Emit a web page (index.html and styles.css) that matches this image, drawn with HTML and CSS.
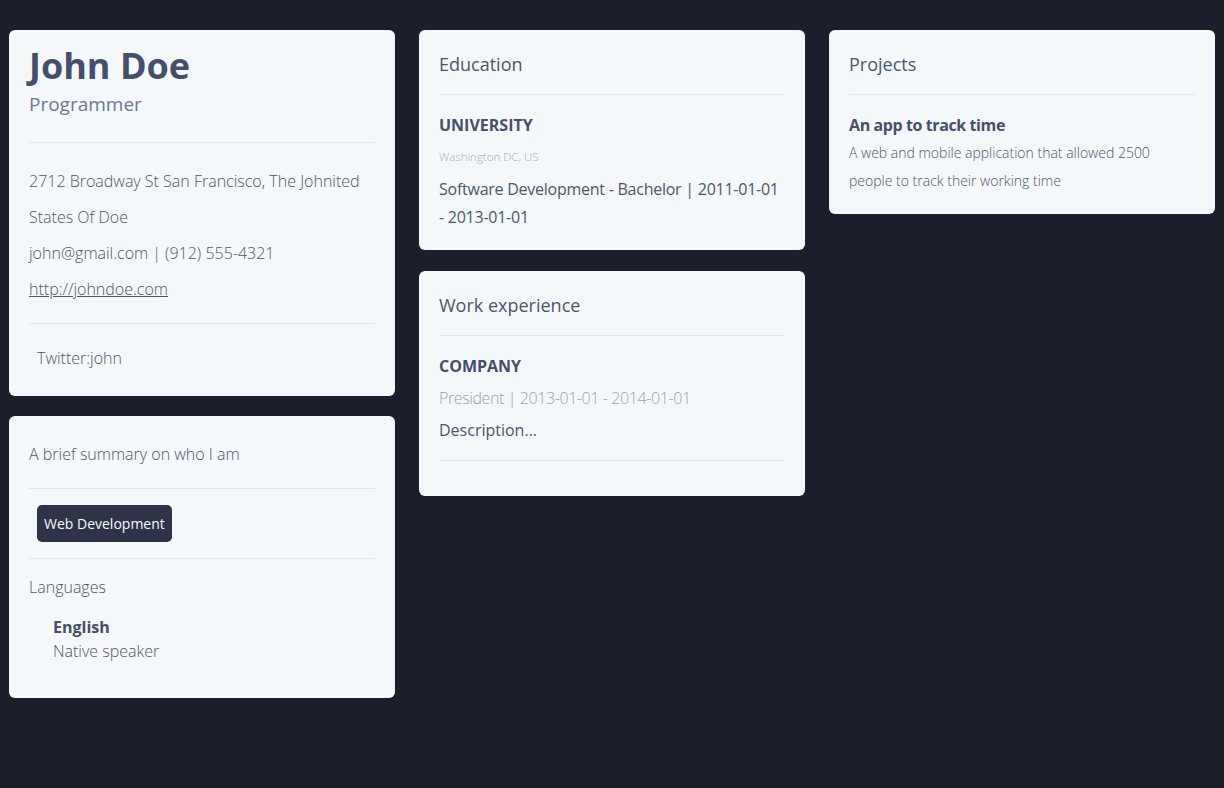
FILE: index.html
```html
<!DOCTYPE html>
<html lang="en">
<head>
<meta charset="utf-8">
<title>John Doe - Resume</title>
<link rel="stylesheet" href="styles.css">
</head>
<body>
<main class="grid">
  <div class="col">
    <section class="card card-profile">
      <h1 class="name">John Doe</h1>
      <div class="role">Programmer</div>
      <hr class="sep sep-head">
      <div class="contact">
        <div>2712 Broadway St San Francisco, The Johnited States Of Doe</div>
        <div>john@gmail.com | (912) 555-4321</div>
        <div><a href="#" class="link">http://johndoe.com</a></div>
      </div>
      <hr class="sep">
      <div class="profiles">Twitter:john</div>
    </section>
    <section class="card card-summary">
      <div class="summary">A brief summary on who I am</div>
      <hr class="sep">
      <div class="skills"><span class="badge">Web Development</span></div>
      <hr class="sep">
      <div class="lang-title">Languages</div>
      <ul class="langs">
        <li><div class="lang-name">English</div><div class="lang-level">Native speaker</div></li>
      </ul>
    </section>
  </div>
  <div class="col">
    <section class="card">
      <h2 class="card-title">Education</h2>
      <hr class="sep">
      <div class="item-title">UNIVERSITY</div>
      <div class="location">Washington DC, US</div>
      <div class="degree">Software Development - Bachelor | 2011-01-01 - 2013-01-01</div>
    </section>
    <section class="card card-work">
      <h2 class="card-title">Work experience</h2>
      <hr class="sep">
      <div class="item-title">COMPANY</div>
      <div class="position">President | 2013-01-01 - 2014-01-01</div>
      <div class="desc">Description...</div>
      <hr class="sep sep-end">
    </section>
  </div>
  <div class="col">
    <section class="card">
      <h2 class="card-title">Projects</h2>
      <hr class="sep">
      <div class="item-title item-title-case">An app to track time</div>
      <div class="project-desc">A web and mobile application that allowed 2500 people to track their working time</div>
    </section>
  </div>
</main>
</body>
</html>
```
FILE: styles.css
```css
* { box-sizing: border-box; }
html, body { margin: 0; padding: 0; }
body {
  background: #1b1e2b;
  font-family: "Open Sans", "Noto Sans", sans-serif;
  color: #4c566a;
  min-height: 788px;
}
.grid {
  display: grid;
  grid-template-columns: 386px 386px 386px;
  column-gap: 24px;
  padding: 30px 9px;
  align-items: start;
}
.col {
  display: flex;
  flex-direction: column;
  gap: 20px;
}
.card {
  background: #f5f8fb;
  border-radius: 6px;
  padding: 20px 20px 19px;
}
.sep {
  border: 0;
  border-top: 1px solid #e1e5ee;
  margin: 16px 0 0;
  height: 0;
}
.card-profile { padding-bottom: 20px; }
.name {
  margin: 0;
  font-size: 36px;
  line-height: 32px;
  font-weight: 700;
  color: #464f69;
}
.role {
  margin-top: 10px;
  font-size: 19px;
  line-height: 24px;
  color: #6b7896;
  font-weight: 400;
}
.sep-head { margin-top: 26px; }
.contact {
  margin-top: 20px;
  font-size: 16px;
  line-height: 36px;
  font-weight: 300;
}
.link { color: #4c566a; text-decoration: underline; }
.profiles {
  margin-top: 16px;
  padding-left: 8px;
  font-size: 16px;
  line-height: 36px;
  font-weight: 300;
}
.card-summary { padding-bottom: 35px; }
.summary {
  font-size: 16px;
  line-height: 36px;
  font-weight: 300;
}
.skills {
  margin-top: 16px;
  padding-left: 8px;
  display: flex;
}
.badge {
  background: #2e3347;
  color: #f7f9fc;
  font-size: 14px;
  line-height: 21px;
  padding: 8px 7px;
  border-radius: 5px;
}
.lang-title {
  margin-top: 16px;
  font-size: 16px;
  line-height: 24px;
  font-weight: 300;
}
.langs {
  list-style: none;
  margin: 16px 0 0;
  padding: 0 0 0 24px;
  font-size: 16px;
  line-height: 24px;
}
.lang-name { font-weight: 700; color: #464f69; }
.lang-level { font-weight: 300; }
.card-title {
  margin: 0;
  font-size: 18px;
  line-height: 28px;
  font-weight: 400;
}
.item-title {
  margin-top: 16px;
  font-size: 16px;
  line-height: 28px;
  font-weight: 700;
  color: #464f69;
}
.item-title-case { letter-spacing: -0.4px; }
.location {
  font-size: 11.5px;
  line-height: 36px;
  font-weight: 300;
  color: #a3aabb;
}
.degree {
  font-size: 16px;
  line-height: 28px;
  font-weight: 400;
  letter-spacing: -0.25px;
}
.position {
  font-size: 16px;
  line-height: 36px;
  font-weight: 300;
  color: #9aa0b1;
  letter-spacing: -0.4px;
}
.desc {
  font-size: 16px;
  line-height: 28px;
  font-weight: 400;
}
.card-work { padding-bottom: 20px; margin-top: 1px; }
.sep-end { margin-top: 16px; margin-bottom: 15px; }
.project-desc {
  font-size: 14px;
  line-height: 28px;
  font-weight: 300;
}
```
